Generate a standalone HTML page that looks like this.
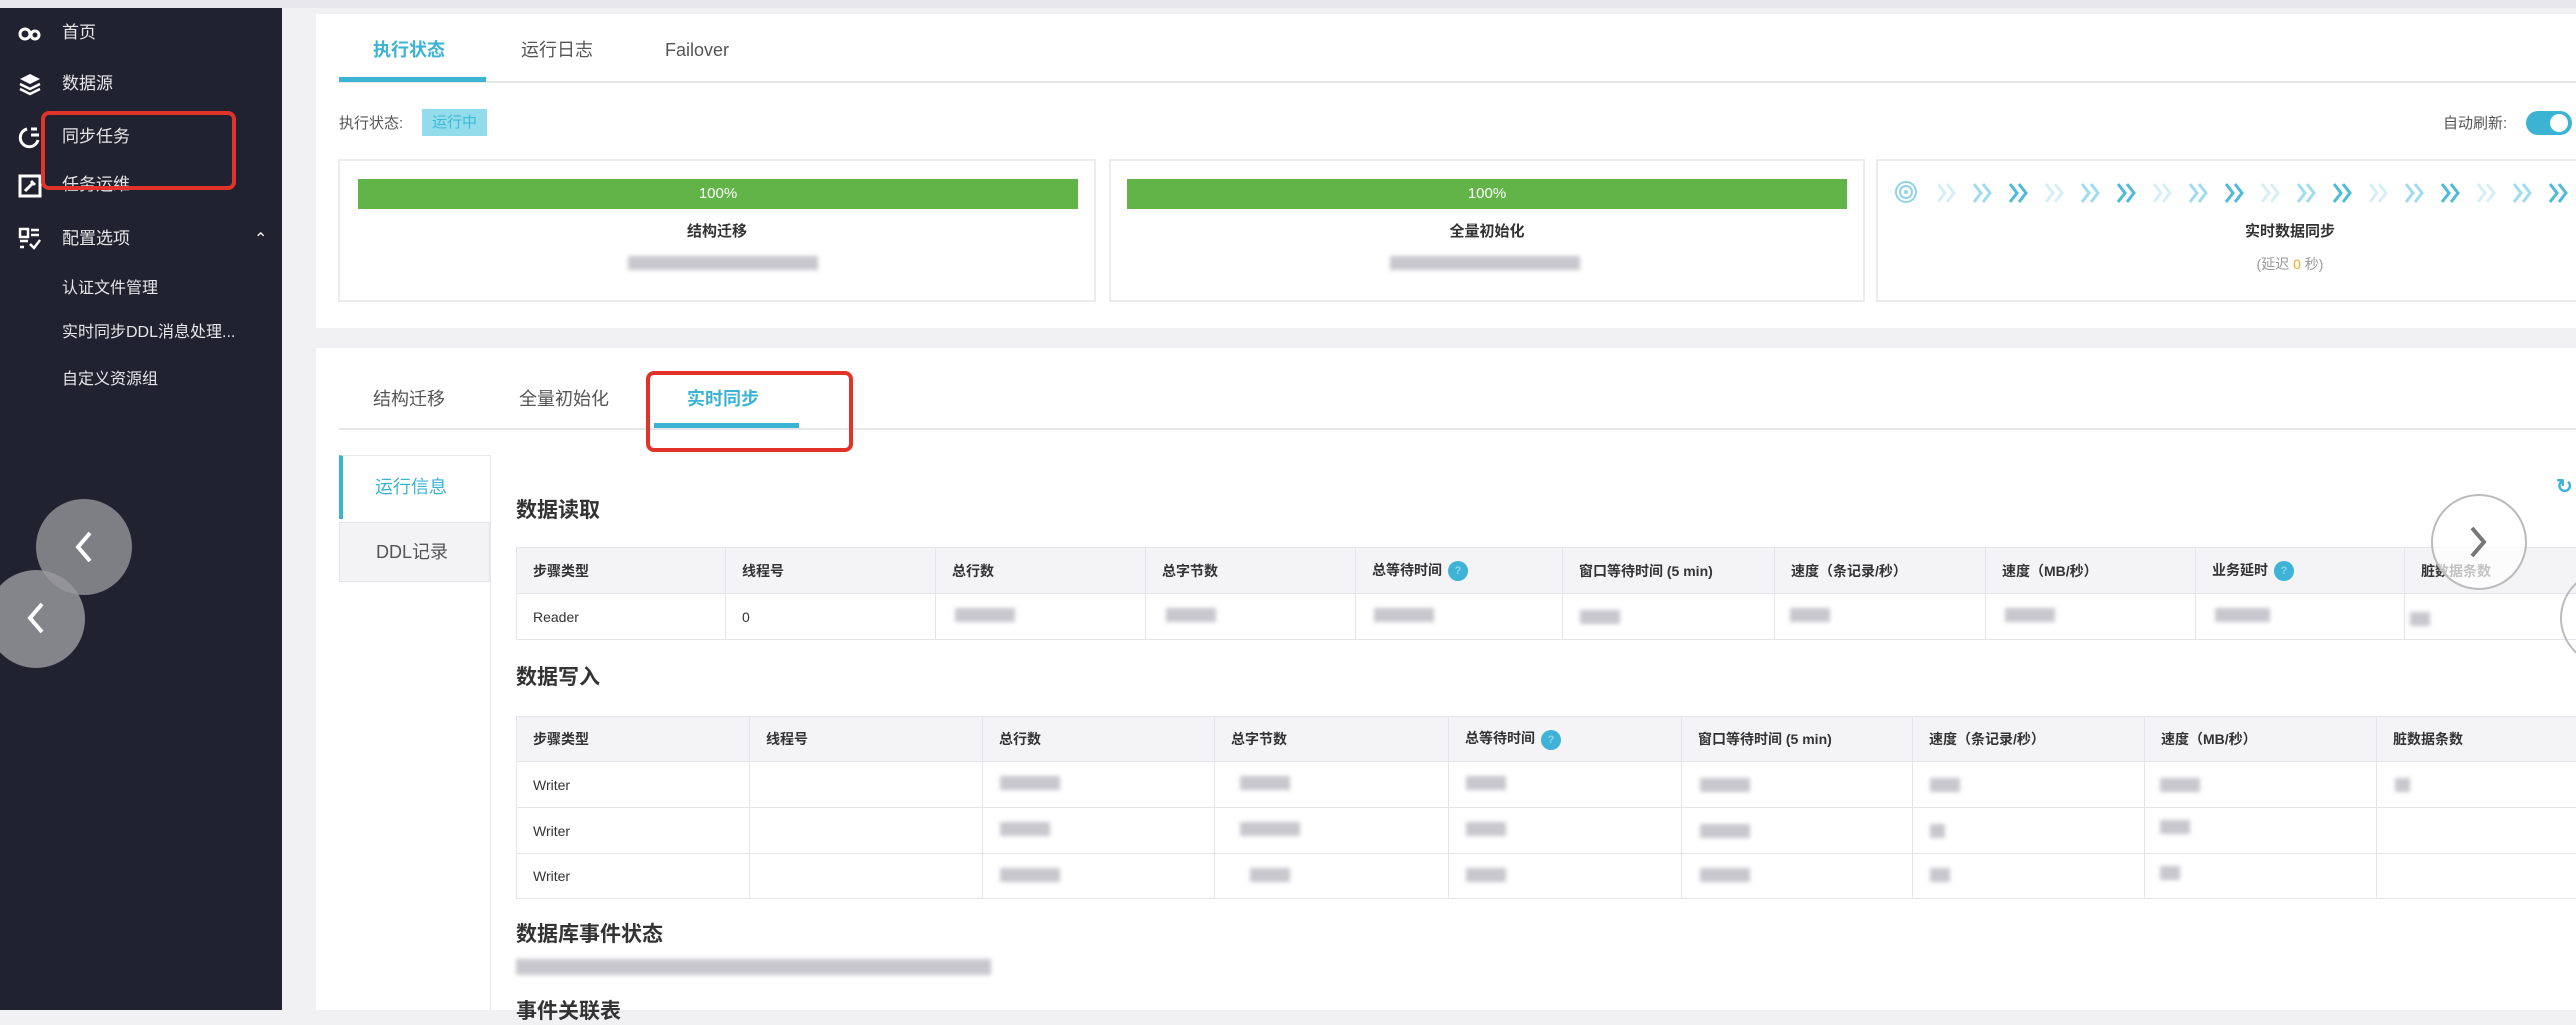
<!DOCTYPE html>
<html><head><meta charset="utf-8">
<style>
*{margin:0;padding:0;box-sizing:border-box}
body{width:2576px;height:1010px;overflow:hidden;background:#f1f1f4;font-family:"Liberation Sans","Noto Sans CJK SC",sans-serif;position:relative;color:#333}
.a{position:absolute}
.side{left:0;top:8px;width:282px;height:1002px;background:#20222f}
.si{position:absolute;left:62px;color:#e6e6ea;font-size:17px;line-height:20px}
.ico{position:absolute;left:18px;width:24px;height:24px}
.card{background:#fff}
.tab{font-size:18px;color:#555;line-height:22px}
.blur{position:absolute;height:14px;background:#9a9aa6;filter:blur(2px);opacity:.55}
table{border-collapse:collapse;position:absolute;font-size:14px}
td,th{border:1px solid #e4e5ea;text-align:left;padding-left:16px;font-weight:normal;position:relative}
th{background:#f4f4f7;font-weight:bold;color:#333}
.q{display:inline-block;width:20px;height:20px;border-radius:50%;background:#3fb3d6;vertical-align:middle;margin-left:6px;color:#8fd6ea;font-size:11px;text-align:center;line-height:20px}
.h{position:absolute;font-size:21px;font-weight:bold;color:#333}
</style></head><body>
<div class="a" style="left:0;top:0;width:2576px;height:8px;background:#e8e8ec"></div>
<div class="a side"></div>
<svg class="ico" style="top:22px" viewBox="0 0 24 24"><circle cx="7" cy="12" r="5" fill="none" stroke="#fff" stroke-width="3"/><circle cx="17" cy="13" r="4" fill="none" stroke="#fff" stroke-width="3"/></svg>
<svg class="ico" style="top:72px" viewBox="0 0 24 24"><path d="M12 2L22 7 12 12 2 7Z" fill="#fff"/><path d="M2 12l10 5 10-5M2 17l10 5 10-5" fill="none" stroke="#fff" stroke-width="2.5"/></svg>
<svg class="ico" style="top:125px" viewBox="0 0 24 24"><path d="M9 4A9 9 0 1 0 20 15" fill="none" stroke="#fff" stroke-width="3"/><path d="M13 4h6M13 10h8" stroke="#fff" stroke-width="3"/></svg>
<svg class="ico" style="top:174px" viewBox="0 0 24 24"><rect x="2" y="2" width="20" height="20" fill="none" stroke="#fff" stroke-width="3"/><path d="M7 17l7-7M13 7l4 4" stroke="#fff" stroke-width="3"/></svg>
<svg class="ico" style="top:227px" viewBox="0 0 24 24"><rect x="2" y="2" width="8" height="8" fill="none" stroke="#fff" stroke-width="2.5"/><path d="M13 3h8M13 8h8M2 14h8M2 20h4M12 17l4 4 6-8" fill="none" stroke="#fff" stroke-width="2.5"/></svg>
<div class="si" style="top:23px">首页</div>
<div class="si" style="top:74px">数据源</div>
<div class="si" style="top:127px">同步任务</div>
<div class="si" style="top:175px">任务运维</div>
<div class="si" style="top:229px">配置选项</div>
<div class="a" style="left:254px;top:229px;color:#fff;font-size:16px">&#8963;</div>
<div class="si" style="top:279px;font-size:16px">认证文件管理</div>
<div class="si" style="top:323px;font-size:16px">实时同步DDL消息处理...</div>
<div class="si" style="top:370px;font-size:16px">自定义资源组</div>
<div class="a" style="left:41px;top:111px;width:195px;height:79px;border:4px solid #e2332a;border-radius:8px"></div>
<div class="a" style="left:36px;top:499px;width:96px;height:96px;border-radius:50%;background:rgba(150,150,155,.8)"></div>
<div class="a" style="left:-13px;top:570px;width:98px;height:98px;border-radius:50%;background:rgba(150,150,155,.85)"></div>
<svg class="a" style="left:70px;top:527px" width="30" height="40"><path d="M20 6L8 20l12 14" fill="none" stroke="#fff" stroke-width="4"/></svg>
<svg class="a" style="left:22px;top:598px" width="30" height="40"><path d="M20 6L8 20l12 14" fill="none" stroke="#fff" stroke-width="4"/></svg>

<div class="a card" style="left:316px;top:14px;width:2260px;height:314px"></div>
<div class="a tab" style="left:373px;top:39px;color:#3bb3d3;font-weight:bold">执行状态</div>
<div class="a tab" style="left:521px;top:39px">运行日志</div>
<div class="a tab" style="left:665px;top:39px">Failover</div>
<div class="a" style="left:339px;top:81px;width:2237px;height:2px;background:#e6e7eb"></div>
<div class="a" style="left:339px;top:77px;width:147px;height:5px;background:#3bb3d3"></div>
<div class="a" style="left:339px;top:112px;font-size:15px;color:#555">执行状态:</div>
<div class="a" style="left:422px;top:109px;width:65px;height:27px;background:#93dceb;color:#3cbbd6;font-size:15px;text-align:center;line-height:27px">运行中</div>
<div class="a" style="left:2443px;top:112px;font-size:15px;color:#555">自动刷新:</div>
<div class="a" style="left:2526px;top:111px;width:46px;height:24px;border-radius:12px;background:#3bb3d3"></div>
<div class="a" style="left:2550px;top:114px;width:18px;height:18px;border-radius:50%;background:#fff"></div>

<div class="a" style="left:338px;top:159px;width:758px;height:143px;border:2px solid #ececf0"></div>
<div class="a" style="left:358px;top:179px;width:720px;height:30px;background:#62b348;color:#fff;font-size:15px;text-align:center;line-height:30px">100%</div>
<div class="a" style="left:338px;top:220px;width:758px;text-align:center;font-size:15px;font-weight:bold">结构迁移</div>
<div class="blur" style="left:628px;top:256px;width:190px"></div>
<div class="a" style="left:1109px;top:159px;width:756px;height:143px;border:2px solid #ececf0"></div>
<div class="a" style="left:1127px;top:179px;width:720px;height:30px;background:#62b348;color:#fff;font-size:15px;text-align:center;line-height:30px">100%</div>
<div class="a" style="left:1109px;top:220px;width:756px;text-align:center;font-size:15px;font-weight:bold">全量初始化</div>
<div class="blur" style="left:1390px;top:256px;width:190px"></div>
<div class="a" style="left:1876px;top:159px;width:720px;height:143px;border:2px solid #ececf0"></div>
<svg class="a" style="left:1894px;top:180px" width="24" height="24"><circle cx="12" cy="12" r="10" fill="none" stroke="#8fd3ea" stroke-width="2"/><circle cx="12" cy="12" r="6" fill="none" stroke="#8fd3ea" stroke-width="2"/><circle cx="12" cy="12" r="2" fill="#8fd3ea"/></svg>
<svg class="a" style="left:1938px;top:182px" width="640" height="22">
<defs><path id="c" d="M0 2l7 9-7 9M9 2l7 9-7 9" fill="none" stroke-width="3"/></defs>
<g stroke="#d6eff7"><use href="#c" x="0"/><use href="#c" x="108"/><use href="#c" x="216"/><use href="#c" x="324"/><use href="#c" x="432"/><use href="#c" x="540"/></g>
<g stroke="#9fdcee"><use href="#c" x="36"/><use href="#c" x="144"/><use href="#c" x="252"/><use href="#c" x="360"/><use href="#c" x="468"/><use href="#c" x="576"/></g>
<g stroke="#4dbbd9"><use href="#c" x="72"/><use href="#c" x="180"/><use href="#c" x="288"/><use href="#c" x="396"/><use href="#c" x="504"/><use href="#c" x="612"/></g>
</svg>
<div class="a" style="left:2190px;top:220px;width:200px;text-align:center;font-size:15px;font-weight:bold">实时数据同步</div>
<div class="a" style="left:2190px;top:254px;width:200px;text-align:center;font-size:14px;color:#999">(延迟<span style="color:#f5a623"> 0 </span>秒)</div>

<div class="a card" style="left:316px;top:348px;width:2260px;height:662px"></div>
<div class="a tab" style="left:373px;top:388px">结构迁移</div>
<div class="a tab" style="left:519px;top:388px">全量初始化</div>
<div class="a tab" style="left:687px;top:388px;color:#3bb3d3;font-weight:bold">实时同步</div>
<div class="a" style="left:339px;top:428px;width:2237px;height:2px;background:#e6e7eb"></div>
<div class="a" style="left:654px;top:423px;width:145px;height:5px;background:#3bb3d3"></div>
<div class="a" style="left:646px;top:371px;width:207px;height:81px;border:4px solid #e2332a;border-radius:8px"></div>

<div class="a" style="left:339px;top:455px;width:151px;height:64px;border-left:4px solid #3bb3d3;border-top:1px solid #e8e8ec;color:#3bb3d3;font-size:18px;line-height:62px;padding-left:32px">运行信息</div>
<div class="a" style="left:339px;top:522px;width:151px;height:60px;background:#f3f3f5;border:1px solid #e4e4e8;color:#555;font-size:18px;line-height:58px;padding-left:36px">DDL记录</div>
<div class="a" style="left:490px;top:455px;width:1px;height:555px;background:#e8e8ec"></div>

<div class="h" style="left:516px;top:494px">数据读取</div>
<div class="a" style="left:2556px;top:474px;color:#3bb3d3;font-size:20px;font-weight:bold">&#8635;</div>
<table style="left:516px;top:547px;width:2070px">
<tr style="height:46px"><th style="width:209px">步骤类型</th><th style="width:210px">线程号</th><th style="width:210px">总行数</th><th style="width:210px">总字节数</th><th style="width:207px">总等待时间<span class="q">?</span></th><th style="width:212px">窗口等待时间 (5 min)</th><th style="width:211px">速度（条记录/秒）</th><th style="width:210px">速度（MB/秒）</th><th style="width:209px">业务延时<span class="q">?</span></th><th>脏数据条数</th></tr>
<tr style="height:46px"><td>Reader</td><td>0</td><td></td><td></td><td></td><td></td><td></td><td></td><td></td><td></td></tr>
</table>
<div class="blur" style="left:955px;top:608px;width:60px"></div>
<div class="blur" style="left:1166px;top:608px;width:50px"></div>
<div class="blur" style="left:1374px;top:608px;width:60px"></div>
<div class="blur" style="left:1580px;top:610px;width:40px"></div>
<div class="blur" style="left:1790px;top:608px;width:40px"></div>
<div class="blur" style="left:2005px;top:608px;width:50px"></div>
<div class="blur" style="left:2215px;top:608px;width:55px"></div>
<div class="blur" style="left:2410px;top:612px;width:20px"></div>

<div class="h" style="left:516px;top:661px">数据写入</div>
<table style="left:516px;top:716px;width:2070px">
<tr style="height:45px"><th style="width:233px">步骤类型</th><th style="width:233px">线程号</th><th style="width:232px">总行数</th><th style="width:234px">总字节数</th><th style="width:233px">总等待时间<span class="q">?</span></th><th style="width:231px">窗口等待时间 (5 min)</th><th style="width:232px">速度（条记录/秒）</th><th style="width:232px">速度（MB/秒）</th><th>脏数据条数</th></tr>
<tr style="height:46px"><td>Writer</td><td></td><td></td><td></td><td></td><td></td><td></td><td></td><td></td></tr>
<tr style="height:46px"><td>Writer</td><td></td><td></td><td></td><td></td><td></td><td></td><td></td><td></td></tr>
<tr style="height:45px"><td>Writer</td><td></td><td></td><td></td><td></td><td></td><td></td><td></td><td></td></tr>
</table>
<div class="blur" style="left:1000px;top:776px;width:60px"></div>
<div class="blur" style="left:1240px;top:776px;width:50px"></div>
<div class="blur" style="left:1466px;top:776px;width:40px"></div>
<div class="blur" style="left:1700px;top:778px;width:50px"></div>
<div class="blur" style="left:1930px;top:778px;width:30px"></div>
<div class="blur" style="left:2160px;top:778px;width:40px"></div>
<div class="blur" style="left:2395px;top:778px;width:15px"></div>
<div class="blur" style="left:1000px;top:822px;width:50px"></div>
<div class="blur" style="left:1240px;top:822px;width:60px"></div>
<div class="blur" style="left:1466px;top:822px;width:40px"></div>
<div class="blur" style="left:1700px;top:824px;width:50px"></div>
<div class="blur" style="left:1930px;top:824px;width:15px"></div>
<div class="blur" style="left:2160px;top:820px;width:30px"></div>
<div class="blur" style="left:1000px;top:868px;width:60px"></div>
<div class="blur" style="left:1250px;top:868px;width:40px"></div>
<div class="blur" style="left:1466px;top:868px;width:40px"></div>
<div class="blur" style="left:1700px;top:868px;width:50px"></div>
<div class="blur" style="left:1930px;top:868px;width:20px"></div>
<div class="blur" style="left:2160px;top:866px;width:20px"></div>

<div class="h" style="left:516px;top:918px">数据库事件状态</div>
<div class="blur" style="left:516px;top:959px;width:475px;height:16px"></div>
<div class="h" style="left:516px;top:995px">事件关联表</div>

<div class="a" style="left:2431px;top:494px;width:96px;height:96px;border-radius:50%;border:2px solid #bbb;background:rgba(255,255,255,.7)"></div>
<svg class="a" style="left:2462px;top:522px" width="30" height="40"><path d="M10 6l12 14-12 14" fill="none" stroke="#777" stroke-width="4"/></svg>
<div class="a" style="left:2560px;top:570px;width:96px;height:96px;border-radius:50%;border:2px solid #bbb"></div>
</body></html>
